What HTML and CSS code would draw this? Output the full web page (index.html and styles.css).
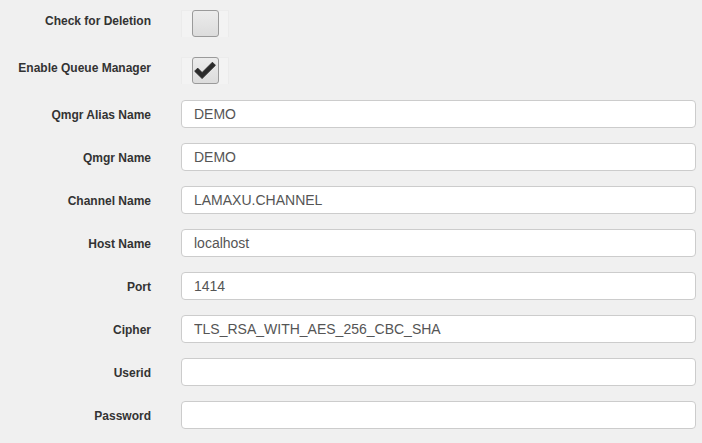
FILE: index.html
```html
<!DOCTYPE html>
<html>
<head>
<meta charset="utf-8">
<link rel="stylesheet" href="styles.css">
</head>
<body>
<form class="form">
  <div class="row row-check">
    <label class="lbl">Check for Deletion</label>
    <div class="check-wrap"><span class="check"></span></div>
  </div>
  <div class="row row-check row-check2">
    <label class="lbl">Enable Queue Manager</label>
    <div class="check-wrap"><span class="check">
      <svg class="tick" viewBox="0 0 22 18" width="22" height="18"><path d="M0.6 10.2 L3.7 7.1 L8.1 11.5 L18.4 1.2 L21.5 4.3 L8.1 17.6 Z" fill="#2b2b2b" stroke="#2b2b2b" stroke-width="0.8" stroke-linejoin="round"/></svg>
    </span></div>
  </div>
  <div class="row"><label class="lbl">Qmgr Alias Name</label><input class="inp" type="text" value="DEMO"></div>
  <div class="row"><label class="lbl">Qmgr Name</label><input class="inp" type="text" value="DEMO"></div>
  <div class="row"><label class="lbl">Channel Name</label><input class="inp" type="text" value="LAMAXU.CHANNEL"></div>
  <div class="row"><label class="lbl">Host Name</label><input class="inp" type="text" value="localhost"></div>
  <div class="row"><label class="lbl">Port</label><input class="inp" type="text" value="1414"></div>
  <div class="row"><label class="lbl">Cipher</label><input class="inp" type="text" value="TLS_RSA_WITH_AES_256_CBC_SHA"></div>
  <div class="row"><label class="lbl">Userid</label><input class="inp" type="text" value=""></div>
  <div class="row"><label class="lbl">Password</label><input class="inp" type="password" value=""></div>
</form>
</body>
</html>
```
FILE: styles.css
```css
html, body {
  margin: 0;
  padding: 0;
  background: #f0f0f0;
}
body {
  font-family: "Liberation Sans", Arial, sans-serif;
  color: #333;
}
.form {
  padding-top: 10px;
  display: flex;
  flex-direction: column;
}
.row {
  display: flex;
  align-items: flex-start;
  height: 28px;
  margin-bottom: 15px;
}
.row-check {
  height: 27px;
  margin-bottom: 20px;
}
.row-check2 {
  margin-bottom: 16px;
}
.lbl {
  width: 151px;
  flex: none;
  text-align: right;
  font-weight: bold;
  font-size: 12px;
  line-height: 17px;
  padding-top: 7px;
  box-sizing: border-box;
}
.row-check .lbl {
  padding-top: 3px;
}
.check-wrap {
  margin-left: 30px;
  width: 48px;
  height: 27px;
  box-sizing: border-box;
  background: #f3f3f3;
  border-left: 1px solid #ebebeb;
  border-right: 1px solid #ebebeb;
  border-top: 1px solid #ececec;
  display: flex;
  justify-content: center;
}
.check {
  width: 27px;
  height: 27px;
  margin-top: -1px;
  box-sizing: border-box;
  border: 1px solid #9a9a9a;
  border-radius: 3px;
  background: linear-gradient(#ececec, #dcdcdc);
  display: flex;
  align-items: center;
  justify-content: center;
}
.tick {
  margin-left: -1px;
  margin-top: -2px;
}
.inp {
  margin-left: 30px;
  width: 515px;
  height: 28px;
  box-sizing: border-box;
  border: 1px solid #cccccc;
  border-radius: 4px;
  background: #fff;
  padding: 0 12px;
  font-family: "Liberation Sans", Arial, sans-serif;
  font-size: 14px;
  color: #555;
  outline: none;
}
```
